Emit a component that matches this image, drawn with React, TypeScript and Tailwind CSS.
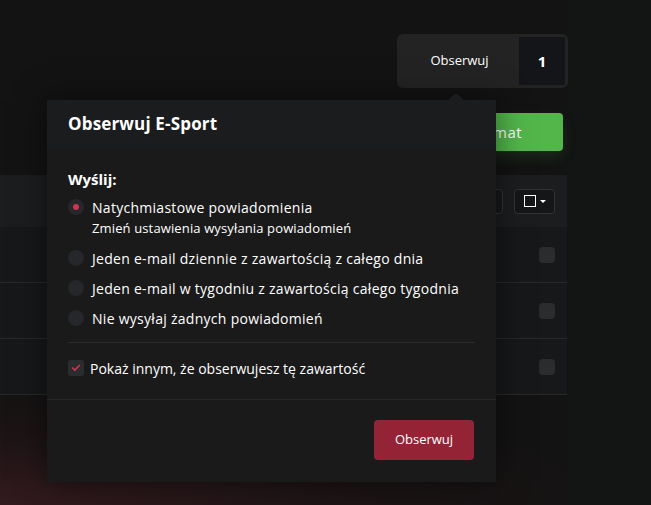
import { Check } from 'lucide-react'

const OPTIONS = [
  'Jeden e-mail dziennie z zawartością z całego dnia',
  'Jeden e-mail w tygodniu z zawartością całego tygodnia',
  'Nie wysyłaj żadnych powiadomień',
]

function Radio({ checked }: { checked?: boolean }) {
  return (
    <span className="w-4 h-4 rounded-full bg-[#25272a] flex items-center justify-center shrink-0">
      {checked && <span className="w-[6px] h-[6px] rounded-full bg-[#d0344f]" />}
    </span>
  )
}

export default function App() {
  return (
    <div
      className="relative w-[651px] h-[505px] overflow-hidden bg-[#131414] text-white"
      style={{ fontFamily: '"Open Sans", "Liberation Sans", sans-serif' }}
    >
      {/* tło strony */}
      <div className="w-[568px] h-full flex flex-col bg-[#131313]">
        <div className="pt-[34px] flex justify-end">
          <div className="w-[171px] h-[54px] bg-[#232323] rounded-md p-[3px] flex">
            <div className="flex-1 flex items-center justify-center text-[13px]">Obserwuj</div>
            <div className="w-[46px] bg-[#141518] flex items-center justify-center font-bold text-[15px]">1</div>
          </div>
        </div>

        <div className="mt-[25px] flex justify-end pr-[5px]">
          <div className="w-[197px] h-[38px] bg-[#52b64b] rounded-[4px] flex items-center justify-end pr-[41px] text-[15px] tracking-[0.03em] shadow-[0_6px_14px_rgba(82,182,75,0.15)]">
            Nowy temat
          </div>
        </div>

        {/* tabela */}
        <div className="mt-[24px] w-[567px]">
          <div className="h-[52px] bg-[#1c1d1f] flex items-center justify-end gap-[11px] pr-[12px]">
            <div className="w-[220px] h-[25px] border border-[#323436] rounded-[4px] bg-[#17181a]" />
            <div className="w-[41px] h-[25px] border border-[#323436] rounded-[4px] bg-[#151618] flex items-center justify-center gap-[4px]">
              <span className="w-[12px] h-[12px] border-[1.5px] border-white" />
              <span className="w-0 h-0 border-l-[3px] border-r-[3px] border-t-[3px] border-l-transparent border-r-transparent border-t-white" />
            </div>
          </div>
          {[0, 1, 2].map((i) => (
            <div key={i} className="h-[56px] bg-[#17181a] border-b border-[#26282a] flex items-center justify-end pr-[12px]">
              <span className="w-4 h-4 rounded-[4px] bg-[#2a2c2e]" />
            </div>
          ))}
        </div>
        <div className="flex-1 bg-[radial-gradient(ellipse_at_bottom_left,#331a1e_0%,#1c1415_45%,#131313_80%)]" />
      </div>

      {/* popup */}
      <div className="absolute left-[47px] top-[100px] w-[449px] h-[382px] bg-[#1a1a1a] shadow-[0_0_30px_rgba(0,0,0,0.5)]">
        <span className="absolute -top-[7px] left-[401px] w-0 h-0 border-l-[8px] border-r-[8px] border-b-[7px] border-l-transparent border-r-transparent border-b-[#1b1c1e]" />
        <div className="h-[48px] bg-[#1b1c1e] px-[21px] flex items-center text-[17px] font-bold tracking-[0.01em]">
          Obserwuj E-Sport
        </div>

        <div className="px-[21px] pt-[22px] h-[251px]">
          <div className="h-[18px] leading-[18px] text-[15px] font-bold">Wyślij:</div>

          <div className="mt-[9px] h-[20px] flex items-center gap-[8px] text-[14px] tracking-[0.02em]">
            <Radio checked />
            <span>Natychmiastowe powiadomienia</span>
          </div>
          <div className="mt-[1px] h-[20px] leading-[20px] pl-[24px] text-[13px] tracking-[0.01em]">
            Zmień ustawienia wysyłania powiadomień
          </div>

          <div className="mt-[5px]">
            {OPTIONS.map((o) => (
              <div key={o} className="h-[30px] flex items-center gap-[8px] text-[14px] tracking-[0.02em]">
                <Radio />
                <span>{o}</span>
              </div>
            ))}
          </div>

          <div className="mt-[9px] border-t border-[#2a2a2a]" />

          <div className="mt-[10px] h-[30px] flex items-center gap-[6px] text-[14px]">
            <span className="w-4 h-4 rounded-[3px] bg-[#2a2c2e] flex items-center justify-center">
              <Check size={10} strokeWidth={4} className="text-[#d0344f]" />
            </span>
            <span>Pokaż innym, że obserwujesz tę zawartość</span>
          </div>
        </div>

        <div className="border-t border-[#282828] flex justify-end pr-[22px] pt-[20px]">
          <button className="w-[100px] h-[40px] rounded-[4px] bg-[#952336] text-[13px]">Obserwuj</button>
        </div>
      </div>
    </div>
  )
}
